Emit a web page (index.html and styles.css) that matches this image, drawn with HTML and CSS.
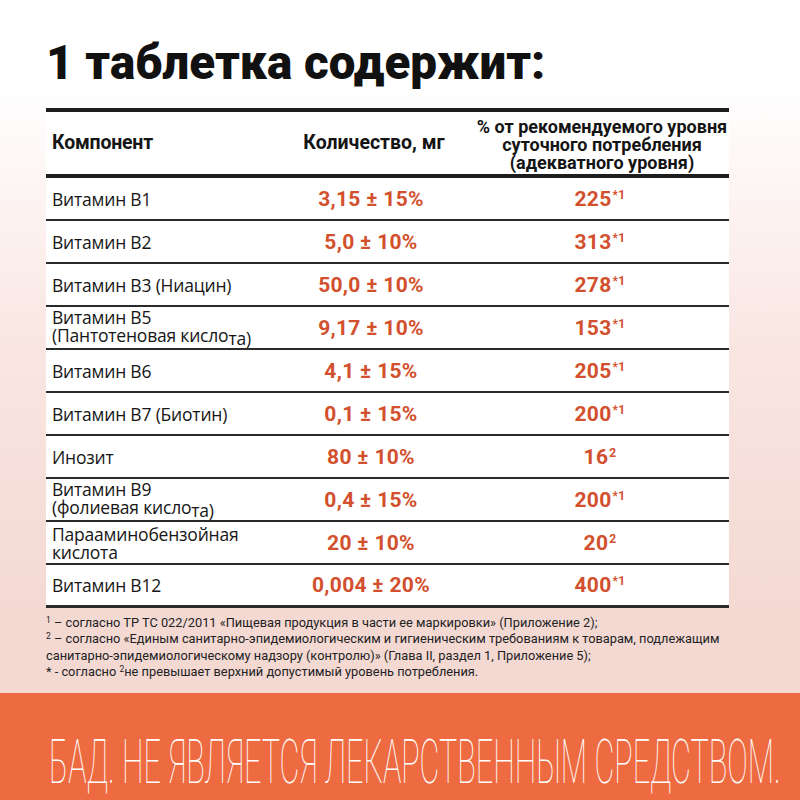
FILE: index.html
```html
<!DOCTYPE html>
<html lang="ru">
<head>
<meta charset="utf-8">
<title>1 таблетка содержит</title>
<link rel="stylesheet" href="styles.css">
</head>
<body>
<div class="page">
  <main class="main">
    <h1 class="title">1 таблетка содержит:</h1>
    <div class="table">
      <div class="row head">
        <div class="c1">Компонент</div>
        <div class="c2">Количество, мг</div>
        <div class="c3">% от рекомендуемого уровня<br>суточного потребления<br>(адекватного уровня)</div>
      </div>
      <div class="row"><div class="c1">Витамин B1</div><div class="c2 val">3,15 ± 15%</div><div class="c3 val">225<sup>*1</sup></div></div>
      <div class="row"><div class="c1">Витамин B2</div><div class="c2 val">5,0 ± 10%</div><div class="c3 val">313<sup>*1</sup></div></div>
      <div class="row"><div class="c1">Витамин B3 (Ниацин)</div><div class="c2 val">50,0 ± 10%</div><div class="c3 val">278<sup>*1</sup></div></div>
      <div class="row"><div class="c1">Витамин B5<br>(Пантотеновая кисло<span class="drop">та)</span></div><div class="c2 val">9,17 ± 10%</div><div class="c3 val">153<sup>*1</sup></div></div>
      <div class="row"><div class="c1">Витамин B6</div><div class="c2 val">4,1 ± 15%</div><div class="c3 val">205<sup>*1</sup></div></div>
      <div class="row"><div class="c1">Витамин B7 (Биотин)</div><div class="c2 val">0,1 ± 15%</div><div class="c3 val">200<sup>*1</sup></div></div>
      <div class="row"><div class="c1">Инозит</div><div class="c2 val">80 ± 10%</div><div class="c3 val">16<sup>2</sup></div></div>
      <div class="row"><div class="c1">Витамин B9<br>(фолиевая кисло<span class="drop">та)</span></div><div class="c2 val">0,4 ± 15%</div><div class="c3 val">200<sup>*1</sup></div></div>
      <div class="row"><div class="c1">Парааминобензойная<br>кислота</div><div class="c2 val">20 ± 10%</div><div class="c3 val">20<sup>2</sup></div></div>
      <div class="row last"><div class="c1">Витамин B12</div><div class="c2 val">0,004 ± 20%</div><div class="c3 val">400<sup>*1</sup></div></div>
    </div>
    <div class="notes">
      <p><sup>1</sup> – согласно ТР ТС 022/2011 «Пищевая продукция в части ее маркировки» (Приложение 2);</p>
      <p><sup>2</sup> – согласно «Единым санитарно-эпидемиологическим и гигиеническим требованиям к товарам, подлежащим санитарно-эпидемиологическому надзору (контролю)» (Глава II, раздел 1, Приложение 5);</p>
      <p>* - согласно <sup>2</sup>не превышает верхний допустимый уровень потребления.</p>
    </div>
  </main>
  <footer class="banner">
    <span class="banner-text">БАД. НЕ ЯВЛЯЕТСЯ ЛЕКАРСТВЕННЫМ СРЕДСТВОМ.</span>
  </footer>
</div>
</body>
</html>
```

FILE: styles.css
```css
* { box-sizing: border-box; }
html, body { margin: 0; padding: 0; }
body { font-family: Roboto, "Liberation Sans", sans-serif; color: #141414; }

.page {
  width: 800px;
  height: 800px;
  display: flex;
  flex-direction: column;
  overflow: hidden;
}

.main {
  height: 693px;
  padding: 40px 71px 0 46px;
  background: linear-gradient(to bottom, #ffffff 12%, #f9e6e2 50%, #f4d9d3 88%);
}

.title {
  margin: 0 0 21px;
  font-family: Roboto, sans-serif;
  font-weight: 900;
  font-size: 47.5px;
  line-height: 47px;
  letter-spacing: 0;
  color: #111;
}

.table {
  background: #fff;
  border-top: 4px solid #1e1e1e;
}

.row {
  display: grid;
  grid-template-columns: 227px 198px 1fr;
  align-items: center;
  height: 43px;
  border-bottom: 2px solid #2a2a2a;
}

.row.head {
  height: 66px;
  border-bottom: 4px solid #1e1e1e;
  font-weight: 700;
  font-size: 19.5px;
  line-height: 18px;
}
.row.head .c1 { padding-left: 6px; font-family: Roboto, sans-serif; font-size: 19.5px; font-weight: 700; }
.row.head .c2 { padding-left: 4px; }
.row.head .c3 { text-align: center; padding-left: 4px; padding-top: 4px; font-size: 18px; }

.row.last { border-bottom-width: 3px; }

.c1 {
  padding-left: 6px;
  font-family: "Open Sans", sans-serif;
  font-size: 17.5px;
  line-height: 18px;
  color: #161616;
  letter-spacing: -0.2px;
}
.c2, .c3 { text-align: center; }

.val {
  font-family: Roboto, sans-serif;
  font-weight: 700;
  font-size: 21px;
  color: #d2502d;
  letter-spacing: 0.3px;
}
.c2.val { padding-right: 2px; }
.val sup {
  font-size: 12px;
  vertical-align: 7px;
  line-height: 0;
  margin-left: 1px;
}

.drop { vertical-align: -3px; }

.notes {
  margin-top: 7px;
  margin-right: -8px;
  font-family: Roboto, sans-serif;
  font-size: 12.8px;
  line-height: 16.3px;
  color: #222;
}
.notes p { margin: 0; }
.notes sup { font-size: 8.5px; vertical-align: 4px; line-height: 0; }

.banner {
  height: 107px;
  background: #ee6b42;
  padding: 38px 0 0 49px;
  color: #fff;
  white-space: nowrap;
}
.banner-text {
  display: inline-block;
  font-family: Roboto, sans-serif;
  font-weight: 100;
  font-size: 62px;
  line-height: 62px;
  transform: scaleX(0.494);
  transform-origin: left center;
}
```
